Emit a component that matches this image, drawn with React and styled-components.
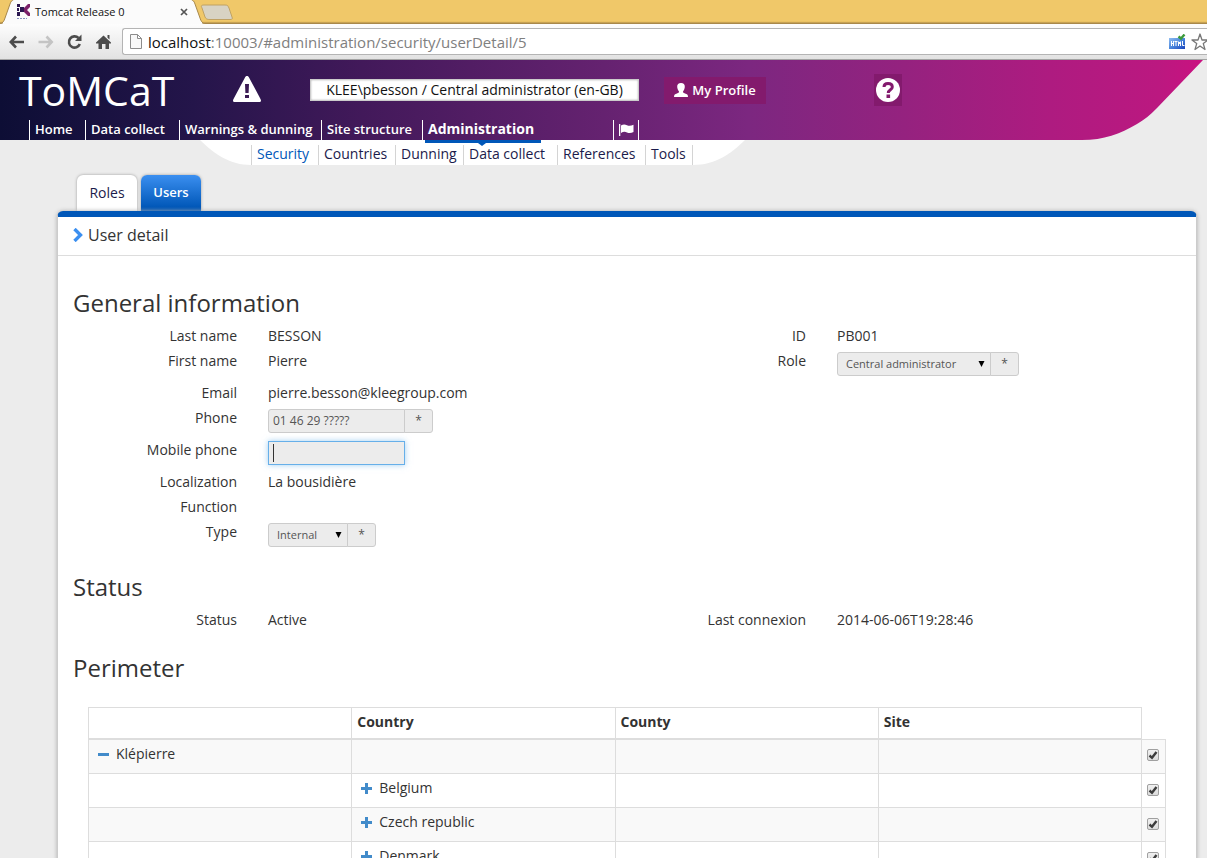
import React from 'react';
import styled, { createGlobalStyle, css } from 'styled-components';

const GlobalStyle = createGlobalStyle`
  *, *::before, *::after { box-sizing: border-box; }
  body {
    margin: 0;
    background: #ececec;
    color: #333;
    font-family: "Open Sans", "Noto Sans", sans-serif;
    font-size: 14px;
    line-height: 20px;
  }
  button, input, select { font-family: inherit; margin: 0; }
  a { color: inherit; text-decoration: none; }
`;

const Window = styled.div`
  display: flex;
  flex-direction: column;
  height: 100vh;
  overflow: hidden;
`;

/* ---------- browser chrome ---------- */

const TabStrip = styled.div`
  display: flex;
  flex: none;
  align-items: flex-end;
  height: 24px;
  background: linear-gradient(#f0c869 21px, #e4bb5c 22px, #a8884a 23px);
`;

const BrowserTab = styled.div`
  position: relative;
  display: flex;
  align-items: center;
  width: 205px;
  height: 24px;
  padding: 0 15px 0 16px;
  font-size: 11px;
  color: #111;
`;

const TabShape = styled.svg`
  position: absolute;
  inset: 0;
  z-index: 0;
`;

const TabTitle = styled.span`
  position: relative;
  flex: 1;
  margin-left: 4px;
  white-space: nowrap;
`;

const Favicon = styled.svg`
  position: relative;
`;

const TabClose = styled.button`
  position: relative;
  display: flex;
  padding: 2px;
  border: 0;
  background: none;
`;

const NewTab = styled.button`
  display: flex;
  align-self: flex-start;
  margin: 4px 0 0 -5px;
  padding: 0;
  border: 0;
  background: none;
`;

const Toolbar = styled.div`
  display: flex;
  flex: none;
  align-items: center;
  height: 36px;
  padding-left: 8px;
  background: linear-gradient(#fdfdfd, #e2e2e2);
  border-bottom: 1px solid #a3a3a3;
`;

const ToolButton = styled.button`
  display: flex;
  flex: none;
  width: 18px;
  margin-right: 11px;
  padding: 0;
  border: 0;
  background: none;
`;

const AddressBar = styled.div`
  display: flex;
  flex: 1;
  align-items: center;
  height: 27px;
  margin-left: -2px;
  padding-left: 7px;
  background: #fff;
  border: 1px solid #b4b4b4;
  border-right: 0;
  border-radius: 3px 0 0 3px;
`;

const Address = styled.span`
  flex: 1;
  margin-left: 6px;
  font-size: 15px;
  color: #808080;
  white-space: nowrap;
  b { font-weight: 400; color: #111; }
`;

const AddressIcons = styled.div`
  display: flex;
  gap: 5px;
  align-items: center;
`;

/* ---------- application header ---------- */

const Header = styled.header`
  position: relative;
  display: flex;
  flex-direction: column;
  justify-content: space-between;
  flex: none;
  height: 80px;
  color: #fff;
  background: linear-gradient(90deg, #0d0e35 0%, #24154a 16%, #42195a 30%, #652270 50%, #7c2780 62%, #95227f 75%, #ae1b80 87%, #bb1880 96%, #cb1180 100%);
`;

const HeaderEdge = styled.svg`
  position: absolute;
  top: 0;
  right: 0;
`;

const Banner = styled.div`
  display: flex;
  align-items: center;
  height: 60px;
  padding-left: 19px;
`;

const Brand = styled.h1`
  width: 214px;
  margin: 0;
  font-size: 41px;
  line-height: 60px;
  font-weight: 400;
`;

const AlertButton = styled.button`
  display: flex;
  width: 28px;
  margin-right: 49px;
  padding: 0 0 2px;
  border: 0;
  background: none;
`;

const Identity = styled.input`
  width: 329px;
  height: 22px;
  padding: 0 0 1px;
  border: 1px solid #ccc;
  box-shadow: inset 0 0 2px #aaa;
  background: #fff;
  color: #111;
  font-size: 14px;
  text-align: center;
`;

const ProfileButton = styled.button`
  display: flex;
  align-items: center;
  justify-content: center;
  gap: 4px;
  width: 102px;
  height: 27px;
  margin-left: 25px;
  padding: 0;
  border: 0;
  background: #831a6d;
  color: #fff;
  font-size: 13px;
  font-weight: 600;
`;

const HelpButton = styled.button`
  display: flex;
  align-items: center;
  justify-content: center;
  width: 28px;
  height: 32px;
  margin-left: 108px;
  padding: 0;
  border: 0;
  background: #831a6d;
`;

const MainNav = styled.nav`
  display: grid;
  grid-template-columns: 56px 94px 142px 101px 191px 26px;
  padding-left: 29px;
`;

const NavLink = styled.a`
  position: relative;
  height: 20px;
  padding-left: 5px;
  border-left: 1px solid #fff;
  font-size: ${(p) => (p.$active ? 14 : 13)}px;
  line-height: 18px;
  font-weight: ${(p) => (p.$active ? 700 : 600)};
  white-space: nowrap;
`;

const FlagLink = styled.a`
  display: flex;
  align-items: center;
  justify-content: center;
  border-left: 1px solid #fff;
  border-right: 1px solid #fff;
`;

const ActiveMark = styled.svg`
  position: absolute;
  top: 20px;
  left: 2px;
  z-index: 1;
`;

const SubNav = styled.nav`
  display: flex;
  flex: none;
  height: 25px;
  padding-left: 200px;
`;

const SubLinks = styled.div`
  display: grid;
  grid-template-columns: 67px 77px 68px 94px 88px 48px;
  align-items: end;
  height: 25px;
  background: #fff;
`;

const SubLink = styled.a`
  height: 20px;
  padding-left: 5px;
  border-left: 1px solid #d4d4d4;
  line-height: 18px;
  font-size: 14px;
  color: ${(p) => (p.$active ? '#0057b8' : '#1b1b4b')};
  white-space: nowrap;
  &:last-child { border-right: 1px solid #d4d4d4; }
`;

/* ---------- panel ---------- */

const Content = styled.main`
  padding: 10px 10px 0 57px;
`;

const Tabs = styled.div`
  display: flex;
  gap: 4px;
  padding-left: 20px;
`;

const Tab = styled.button`
  height: 36px;
  width: 60px;
  padding: 0 0 2px;
  border: 0;
  border-radius: 6px 6px 0 0;
  font-size: 14px;
  box-shadow: 0 0 3px #999;
  ${(p) => p.$active
    ? css`background: linear-gradient(#3b8ff0, #0057b8 90%); color: #fff; font-size: 13px; font-weight: 600;`
    : css`background: #fff; color: #1b1b4b;`}
`;

const Panel = styled.section`
  position: relative;
  background: #fff;
  border: 1px solid #ccc;
  border-top: 6px solid #0057b8;
  border-radius: 6px 6px 0 0;
  box-shadow: 0 0 4px #aaa;
  padding-bottom: 40px;
`;

const PanelTitle = styled.div`
  display: flex;
  align-items: center;
  gap: 5px;
  height: 39px;
  padding: 0 0 2px 15px;
  border-bottom: 1px solid #ddd;
  font-size: 16px;
`;

const PanelBody = styled.div`
  padding-top: 15px;
`;

const Heading = styled.h2`
  margin: 18px 0 10px;
  padding-left: 15px;
  font-size: 24px;
  line-height: 28px;
  font-weight: 400;
`;

const FieldRow = styled.div`
  display: grid;
  grid-template-columns: 1fr 1fr;
  min-height: ${(p) => (p.$edit ? 32 : 25)}px;
`;

const FieldBox = styled.div`
  display: grid;
  grid-template-columns: 179px 1fr;
  column-gap: 31px;
  align-items: start;
`;

const Label = styled.label`
  font-size: 14px;
  line-height: 18px;
  text-align: right;
`;

const Value = styled.output`
  font-size: 14px;
  line-height: 18px;
`;

const Group = styled.div`
  display: flex;
  height: 24px;
`;

const controlStyle = css`
  height: 24px;
  border: 1px solid #ccc;
  background: #ececec;
  color: #555;
  font-size: 12px;
`;

const TextBox = styled.input`
  ${controlStyle}
  width: 137px;
  padding: 0 4px 1px;
  border-radius: 3px 0 0 3px;
  outline: 0;
  ${(p) => p.$focused && css`
    border-color: #66afe9;
    border-radius: 0;
    box-shadow: 0 0 6px rgba(102, 175, 233, 0.6);
    background: linear-gradient(#333, #333) 4px 2px / 1px 18px no-repeat #ececec;
  `}
`;

const SelectBox = styled.span`
  position: relative;
  display: flex;
  width: ${(p) => p.$width}px;
`;

const Select = styled.select`
  ${controlStyle}
  font-size: 11px;
  appearance: none;
  width: 100%;
  padding: 0 8px 2px;
  border-radius: 3px 0 0 3px;
`;

const SelectArrow = styled.svg`
  position: absolute;
  right: 6px;
  top: 9px;
  pointer-events: none;
`;

const Required = styled.span`
  ${controlStyle}
  width: 29px;
  margin-left: -1px;
  border-radius: 0 3px 3px 0;
  line-height: 22px;
  text-align: center;
`;

const TableWrap = styled.div`
  margin: 25px 30px 0;
`;

const Grid = styled.table`
  width: 100%;
  border-collapse: collapse;
  table-layout: fixed;
  font-size: 14px;
`;

const CheckCol = styled.col`
  width: 24px;
`;

const HeadCell = styled.th`
  height: 31px;
  padding: 4px 5px 6px;
  border: 1px solid #ddd;
  border-bottom: 2px solid #ddd;
  text-align: left;
  font-weight: 700;
`;

const EmptyHead = styled.td`
  padding: 0;
`;

const BodyRow = styled.tr`
  background: ${(p) => (p.$odd ? '#f9f9f9' : '#fff')};
`;

const Cell = styled.td`
  height: 34px;
  padding: 4px 5px 9px;
  border: 1px solid #ddd;
`;

const CheckCell = styled.td`
  padding: 0 1px 2px 0;
  border: 1px solid #ddd;
`;

const Node = styled.span`
  display: flex;
  align-items: center;
  gap: 7px;
  padding-left: 4px;
`;

const Toggle = styled.button`
  display: flex;
  padding: 0;
  border: 0;
  background: none;
`;

const CheckLabel = styled.label`
  position: relative;
  display: block;
  width: 12px;
  height: 12px;
  margin: 0 auto;
`;

const CheckBox = styled.input`
  appearance: none;
  display: block;
  width: 12px;
  height: 12px;
  border: 1px solid #a0a0a0;
  border-radius: 2px;
  background: linear-gradient(#f0f0f0, #dcdcdc);
  & + svg { display: none; }
  &:checked + svg { display: block; }
`;

const CheckMark = styled.svg`
  position: absolute;
  inset: 0;
  pointer-events: none;
`;

/* ---------- pieces ---------- */

function Field({ id, label, value, children }) {
  return (
    <FieldBox>
      <Label htmlFor={id}>{label}</Label>
      {children || <Value id={id}>{value}</Value>}
    </FieldBox>
  );
}

function Picker({ id, width, value }) {
  return (
    <Group>
      <SelectBox $width={width}>
        <Select id={id} defaultValue={value}>
          <option>{value}</option>
        </Select>
        <SelectArrow width="7" height="6"><path d="M0.500 0h6L3.500 6z" fill="#000" /></SelectArrow>
      </SelectBox>
      <Required>*</Required>
    </Group>
  );
}

function TreeNode({ open, name }) {
  return (
    <Node>
      <Toggle aria-label={(open ? 'Collapse ' : 'Expand ') + name}>
        <svg width="11" height="11" fill="#428bca">
          <rect x="0" y="4" width="11" height="3" />
          {!open && <rect x="4" y="0" width="3" height="11" />}
        </svg>
      </Toggle>
      {name}
    </Node>
  );
}

function PerimeterRow({ odd, root, country }) {
  return (
    <BodyRow $odd={odd}>
      <Cell>{root && <TreeNode open name={root} />}</Cell>
      <Cell>{country && <TreeNode name={country} />}</Cell>
      <Cell />
      <Cell />
      <CheckCell>
        <CheckLabel>
          <CheckBox type="checkbox" defaultChecked aria-label={root || country} />
          <CheckMark width="12" height="12">
            <path d="M2.500 6.500L5 8.800L9.500 3" fill="none" stroke="#3c3c3c" strokeWidth="2.400" />
          </CheckMark>
        </CheckLabel>
      </CheckCell>
    </BodyRow>
  );
}

function BrowserChrome() {
  return (
    <>
      <TabStrip>
        <BrowserTab>
          <TabShape width="205" height="24">
            <path d="M0 24C3 23 4 21 5 18L10 4C11 1 12 0 15 -1H190C193 0 194 1 195 4L200 18C201 21 202 23 205 24Z" fill="#fbfbfb" stroke="#a8884a" />
            <rect y="23" x="3" width="199" height="1" fill="#fbfbfb" />
          </TabShape>
          <Favicon width="15" height="16" viewBox="0 0 15 16">
            <path d="M1 0h3v3H1zM4 3h4v5H4zM1 8h3v4H1zM1 4h2v3H1z" fill="#2b1750" />
            <path d="M8 4L12 0h2v3L11 6L14 9v3h-2L8 8z" fill="#7b2069" />
            <path d="M1 14h2v1H1zM4 14h2v1H4zM7 14h2v1H7zM10 14h1v1h-1z" fill="#8791c0" />
          </Favicon>
          <TabTitle>Tomcat Release 0</TabTitle>
          <TabClose aria-label="Close tab">
            <svg width="8" height="8"><path d="M1 1l6 6M7 1L1 7" stroke="#555" strokeWidth="1.700" /></svg>
          </TabClose>
        </BrowserTab>
        <NewTab aria-label="New tab">
          <svg width="34" height="17">
            <path d="M4 1H25C28 1 28 2 29 4L32 13C33 15 32 15.500 30 15.500H10C7 15.500 6 15 5 13L2 4C1 2 1 1 4 1Z" fill="#d8d3c3" stroke="#c0a263" />
          </svg>
        </NewTab>
      </TabStrip>
      <Toolbar>
        <ToolButton aria-label="Back">
          <svg width="18" height="16"><path d="M8 2.500L2.800 8L8 13.500M3 8h13" fill="none" stroke="#4c4c4c" strokeWidth="2.600" /></svg>
        </ToolButton>
        <ToolButton aria-label="Forward">
          <svg width="18" height="16"><path d="M9.500 2.500L14.700 8L9.500 13.500M14.500 8H1.500" fill="none" stroke="#c4c4c4" strokeWidth="2.600" /></svg>
        </ToolButton>
        <ToolButton aria-label="Reload">
          <svg width="18" height="16"><path d="M12.500 4A5.600 5.600 0 1 0 13.800 10" fill="none" stroke="#4c4c4c" strokeWidth="2.600" /><path d="M15.500 0.500V7H9z" fill="#4c4c4c" /></svg>
        </ToolButton>
        <ToolButton aria-label="Home">
          <svg width="18" height="16" fill="#4c4c4c"><path d="M8.500 1.500L16 8.500V9.500H14V15H10.500V10H7V15H3.500V9.500H1V8.500zM12.500 1H14.500V5.500L12.500 3.800z" /></svg>
        </ToolButton>
        <AddressBar>
          <svg width="12" height="15"><path d="M1 .5H7.500L11.500 4.500V14.500H.5V.5zM7.500 .5V4.500H11.500" fill="#f8f8f8" stroke="#8c8c8c" /></svg>
          <Address><b>localhost</b>:10003/#administration/security/userDetail/5</Address>
          <AddressIcons>
            <svg width="17" height="16" viewBox="0 0 17 16">
              <defs>
                <linearGradient id="badge" x1="0" y1="0" x2="1" y2="1"><stop offset="0" stopColor="#8fbcf0" /><stop offset=".5" stopColor="#4a86dc" /><stop offset="1" stopColor="#1a44bc" /></linearGradient>
              </defs>
              <rect x="0" y="4" width="16" height="11" fill="url(#badge)" />
              <path d="M2.500 7v5M4.500 7v5M2.500 9.500h2M5.500 7.500h3M7 7v5M9.500 12V7.500M10.500 8v2M11.500 12V7.500M13.500 7v4.500h2" fill="none" stroke="#fff" />
              <path d="M9.500 2.500L12 4.500L15.500 .5" fill="none" stroke="#3c9a3c" strokeWidth="2.400" />
            </svg>
            <svg width="16" height="18" viewBox="0 0 16 18">
              <path d="M9 1L11 7H17L12.300 10.600L14 16.500L9 13L4 16.500L5.700 10.600L1 7H7Z" fill="#fff" stroke="#777" strokeWidth="1.300" strokeLinejoin="round" />
            </svg>
          </AddressIcons>
        </AddressBar>
      </Toolbar>
    </>
  );
}

function AppHeader() {
  return (
    <>
      <Header>
        <HeaderEdge width="125" height="80">
          <path d="M121 0L75 48C68 55 62 60 55 64C38 74 22 80 0 80H125V0Z" fill="#ececec" />
        </HeaderEdge>
        <Banner>
          <Brand>ToMCaT</Brand>
          <AlertButton aria-label="Warnings">
            <svg width="28" height="26"><path d="M14 0C15 0 15.500 .5 16 1.500L27.500 23C28.500 25 28 26 26 26H2C0 26 -.5 25 .5 23L12 1.500C12.500 .5 13 0 14 0Z" fill="#fff" /><path d="M12 8h4l-.4 9h-3.200zM12 19h4v3h-4z" fill="#3a1a54" /></svg>
          </AlertButton>
          <Identity aria-label="Current user" readOnly value="KLEE\pbesson / Central administrator (en-GB)" />
          <ProfileButton>
            <svg width="14" height="14" fill="#fff"><path d="M7 0C9.500 0 11 1.500 10.800 4C10.600 6 10 7 9 8.500C9 9.500 9.500 10 11 10.500C13 11.200 14 11.600 14 14H0C0 11.600 1 11.200 3 10.500C4.500 10 5 9.500 5 8.500C4 7 3.400 6 3.200 4C3 1.500 4.500 0 7 0Z" /></svg>
            My Profile
          </ProfileButton>
          <HelpButton aria-label="Help">
            <svg width="24" height="24"><circle cx="12" cy="12" r="12" fill="#fff" /><path d="M8 9C8 6 10 5.500 12 5.500C14.500 5.500 16.300 6.800 16.300 9C16.300 12 12.300 11.500 12.300 15" fill="none" stroke="#831a6d" strokeWidth="3" /><rect x="10.500" y="16.500" width="3.600" height="3.500" fill="#831a6d" /></svg>
          </HelpButton>
        </Banner>
        <MainNav>
          <NavLink href="#home">Home</NavLink>
          <NavLink href="#collect">Data collect</NavLink>
          <NavLink href="#warnings">Warnings &amp; dunning</NavLink>
          <NavLink href="#structure">Site structure</NavLink>
          <NavLink href="#administration" $active>
            Administration
            <ActiveMark width="116" height="6"><path d="M0 0H116V3H61L57 6L53 3H0Z" fill="#0057b8" /></ActiveMark>
          </NavLink>
          <FlagLink href="#language" aria-label="Language">
            <svg width="15" height="12" fill="#fff"><path d="M0 0h1.300v12H0zM2 1.500C4 .3 6 .3 8 1.300C10 2.200 12 2 14.500 .8V8C12 9.300 10 9.300 8 8.400C6 7.500 4 7.700 2 9Z" /></svg>
          </FlagLink>
        </MainNav>
      </Header>
      <SubNav>
        <svg width="51" height="25"><path d="M0 0C14 14 30 25 51 25V0Z" fill="#fff" /></svg>
        <SubLinks>
          <SubLink href="#security" $active>Security</SubLink>
          <SubLink href="#countries">Countries</SubLink>
          <SubLink href="#dunning">Dunning</SubLink>
          <SubLink href="#datacollect">Data collect</SubLink>
          <SubLink href="#references">References</SubLink>
          <SubLink href="#tools">Tools</SubLink>
        </SubLinks>
        <svg width="52" height="25"><path d="M52 0C38 14 22 25 0 25V0Z" fill="#fff" /></svg>
      </SubNav>
    </>
  );
}

export default function App() {
  return (
    <Window>
      <GlobalStyle />
      <BrowserChrome />
      <AppHeader />
      <Content>
        <Tabs>
          <Tab>Roles</Tab>
          <Tab $active>Users</Tab>
        </Tabs>
        <Panel>
          <PanelTitle>
            <svg width="10" height="14"><path d="M1.500 1L7.500 7L1.500 13" fill="none" stroke="#3b8ff0" strokeWidth="3.400" /></svg>
            User detail
          </PanelTitle>
          <PanelBody>
            <Heading>General information</Heading>
            <FieldRow>
              <Field id="lastName" label="Last name" value="BESSON" />
              <Field id="userId" label="ID" value="PB001" />
            </FieldRow>
            <FieldRow $edit>
              <Field id="firstName" label="First name" value="Pierre" />
              <Field id="role" label="Role"><Picker id="role" width={154} value="Central administrator" /></Field>
            </FieldRow>
            <FieldRow>
              <Field id="email" label="Email" value="pierre.besson@kleegroup.com" />
            </FieldRow>
            <FieldRow $edit>
              <Field id="phone" label="Phone">
                <Group>
                  <TextBox id="phone" defaultValue="01 46 29 ?????" />
                  <Required>*</Required>
                </Group>
              </Field>
            </FieldRow>
            <FieldRow $edit>
              <Field id="mobile" label="Mobile phone"><TextBox id="mobile" $focused /></Field>
            </FieldRow>
            <FieldRow>
              <Field id="localization" label="Localization" value="La bousidière" />
            </FieldRow>
            <FieldRow>
              <Field id="function" label="Function" />
            </FieldRow>
            <FieldRow $edit>
              <Field id="type" label="Type"><Picker id="type" width={80} value="Internal" /></Field>
            </FieldRow>
            <Heading>Status</Heading>
            <FieldRow>
              <Field id="status" label="Status" value="Active" />
              <Field id="lastConnexion" label="Last connexion" value="2014-06-06T19:28:46" />
            </FieldRow>
            <Heading>Perimeter</Heading>
            <TableWrap>
              <Grid>
                <colgroup>
                  <col />
                  <col />
                  <col />
                  <col />
                  <CheckCol />
                </colgroup>
                <thead>
                  <tr>
                    <HeadCell />
                    <HeadCell>Country</HeadCell>
                    <HeadCell>County</HeadCell>
                    <HeadCell>Site</HeadCell>
                    <EmptyHead />
                  </tr>
                </thead>
                <tbody>
                  <PerimeterRow odd root="Klépierre" />
                  <PerimeterRow country="Belgium" />
                  <PerimeterRow odd country="Czech republic" />
                  <PerimeterRow country="Denmark" />
                </tbody>
              </Grid>
            </TableWrap>
          </PanelBody>
        </Panel>
      </Content>
    </Window>
  );
}
